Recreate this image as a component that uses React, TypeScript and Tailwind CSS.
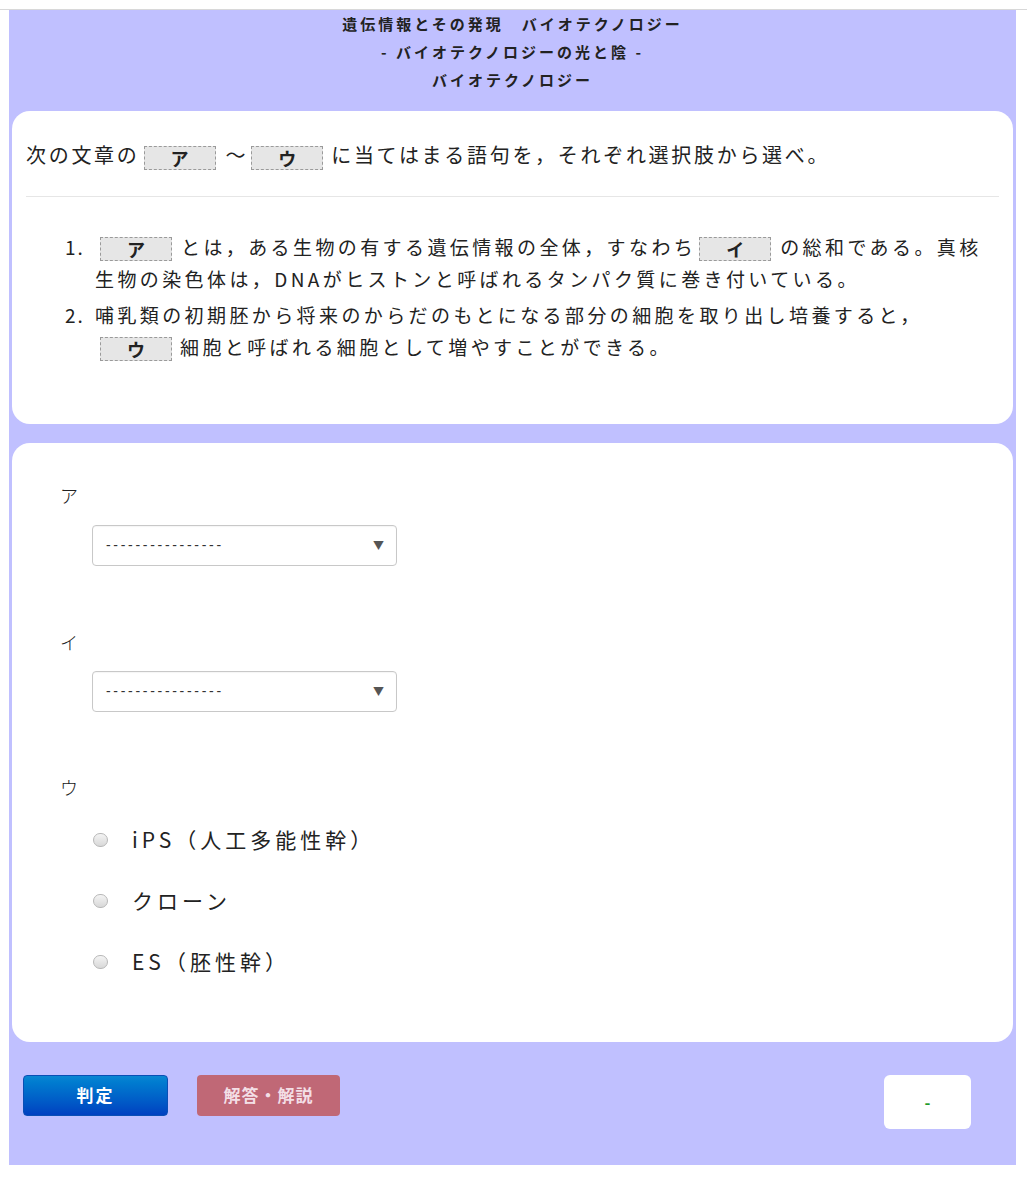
import React from "react";

const jp = { fontFamily: '"Noto Sans CJK JP", "Noto Sans", sans-serif' };

function Blank({ k }: { k: string }) {
  return (
    <span className="inline-flex h-[24px] w-[72px] items-center justify-center border border-dashed border-[#9a9a9a] bg-[#e6e6e6] align-middle text-[18px] font-bold leading-none tracking-normal text-[#222]">
      {k}
    </span>
  );
}

function Select() {
  return (
    <div className="ml-[32px] flex h-[41px] w-[305px] items-center justify-between rounded-[4px] border border-[#c8c8c8] bg-white pl-[13px] pr-[12px] shadow-[inset_0_1px_1px_rgba(0,0,0,0.04)]">
      <span className="text-[14px] tracking-[2.7px] text-[#333]" style={{ fontFamily: '"Liberation Sans", sans-serif' }}>
        ----------------
      </span>
      <span className="text-[11px] text-[#555]">▼</span>
    </div>
  );
}

function Radio({ label }: { label: string }) {
  return (
    <div className="ml-[33px] flex h-[61px] items-center">
      <span className="h-[14px] w-[15px] rounded-full border border-[#b8b8b8] bg-gradient-to-b from-[#f4f4f4] to-[#d8d8d8]" />
      <span className="ml-[24px] text-[21px] tracking-[4px] text-[#222]">{label}</span>
    </div>
  );
}

export default function App() {
  return (
    <div className="min-h-[1180px] bg-white" style={jp}>
      <div className="mt-[9px] border-t border-[#d8d8d8]">
        <div className="ml-[9px] w-[1007px] bg-[#c0c0ff] px-[3px] pb-[36px]">
          <div className="text-center text-[15px] font-bold leading-[28px] tracking-[3px] text-[#222]">
            <div>遺伝情報とその発現　バイオテクノロジー</div>
            <div>- バイオテクノロジーの光と陰 -</div>
            <div>バイオテクノロジー</div>
          </div>

          <div className="mt-[17px] rounded-[18px] bg-white px-[14px] pb-[61px] pt-[30px] text-[#222]">
            <p className="flex items-center text-[20px] leading-[28px] tracking-[2.7px]">
              <span>次の文章の</span>
              <span className="ml-[4px] mr-[10px]"><Blank k="ア" /></span>
              <span>～</span>
              <span className="ml-[3px] mr-[8px]"><Blank k="ウ" /></span>
              <span>に当てはまる語句を，それぞれ選択肢から選べ。</span>
            </p>
            <hr className="mt-[26px] border-t border-[#e6e6e6]" />
            <ol className="mt-[34px] text-[19px] leading-[32px] tracking-[3.4px]">
              <li className="flex">
                <span className="ml-[39px] w-[30px] shrink-0 tracking-[2px]">1.</span>
                <span>
                  <span className="ml-[5px] mr-[9px]"><Blank k="ア" /></span>
                  とは，ある生物の有する遺伝情報の全体，すなわち
                  <span className="ml-[3px] mr-[9px]"><Blank k="イ" /></span>
                  の総和である。真核
                  <br />
                  生物の染色体は，DNAがヒストンと呼ばれるタンパク質に巻き付いている。
                </span>
              </li>
              <li className="mt-[4px] flex">
                <span className="ml-[39px] w-[30px] shrink-0 tracking-[2px]">2.</span>
                <span>
                  哺乳類の初期胚から将来のからだのもとになる部分の細胞を取り出し培養すると，
                  <br />
                  <span className="ml-[5px] mr-[8px]"><Blank k="ウ" /></span>
                  細胞と呼ばれる細胞として増やすことができる。
                </span>
              </li>
            </ol>
          </div>

          <div className="mt-[19px] rounded-[18px] bg-white pb-[49px] pl-[48px] pt-[40px] text-[#222]">
            <div className="text-[18px] font-light leading-[24px]">ア</div>
            <div className="mt-[18px]"><Select /></div>

            <div className="mt-[64px] text-[18px] font-light leading-[24px]">イ</div>
            <div className="mt-[17px]"><Select /></div>

            <div className="mt-[63px] text-[18px] font-light leading-[24px]">ウ</div>
            <div className="mt-[11px]">
              <Radio label="iPS（人工多能性幹）" />
              <Radio label="クローン" />
              <Radio label="ES（胚性幹）" />
            </div>
          </div>

          <div className="mt-[33px] flex items-start pl-[11px] pr-[42px]">
            <button className="h-[41px] w-[145px] rounded-[4px] border border-[#0a4fb5] bg-gradient-to-b from-[#0a86d2] to-[#0040c0] text-[17px] font-bold tracking-[2px] text-white">
              判定
            </button>
            <button className="ml-[29px] h-[41px] w-[143px] rounded-[4px] bg-[#c06876] text-[17px] font-bold tracking-[1px] text-[#f3dfe6]">
              解答・解説
            </button>
            <div className="ml-auto flex h-[54px] w-[87px] items-center justify-center rounded-[6px] bg-white text-[16px] font-bold text-[#1f9a2a]">
              -
            </div>
          </div>
        </div>
      </div>
    </div>
  );
}
